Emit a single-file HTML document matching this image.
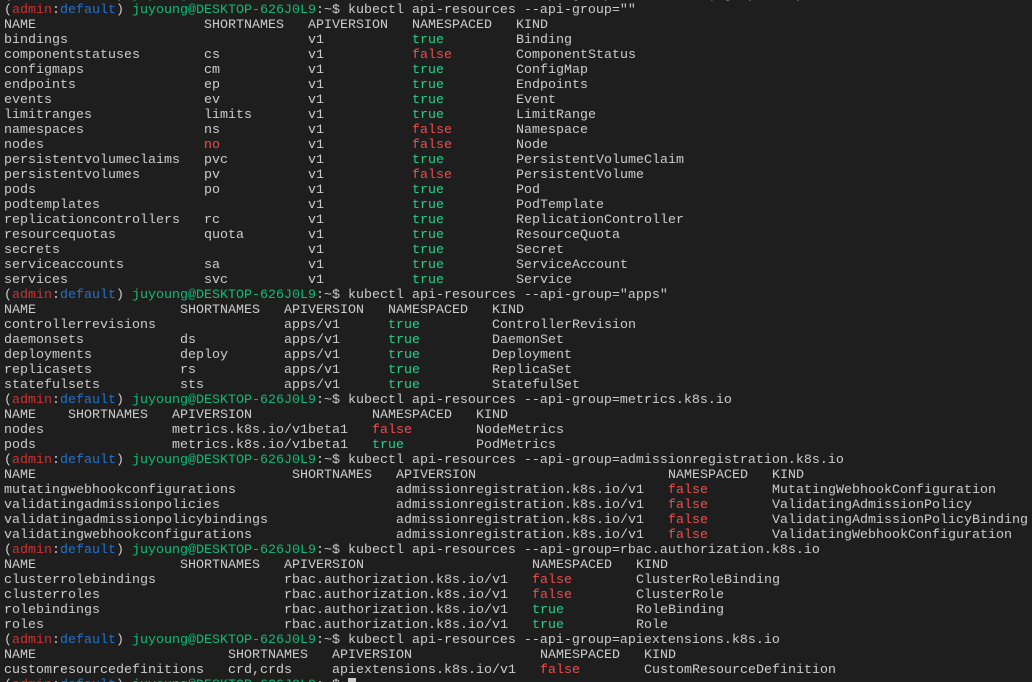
<!DOCTYPE html>
<html><head><meta charset="utf-8"><style>
html{overflow:hidden;height:682px}
html,body{margin:0;padding:0;background:#1e1e1e;width:1032px;height:682px}
body{position:relative;overflow:hidden}
.l{position:absolute;left:0;margin-top:1px;height:15px;line-height:15px;font-family:"Liberation Mono",monospace;font-size:13.33px;color:#cccccc;white-space:pre}
.l i{position:absolute;font-style:normal;top:0}
.t{color:#23d18b}.f{color:#f14c4c}.r{color:#cd3131}.b{color:#2472c8}.g{color:#0dbc79}
.cur{display:inline-block;width:8px;height:14px;background:#cccccc;vertical-align:top}
</style></head><body>
<div class="l" style="top:-13.5px;left:4px">(<span class="r">admin</span>:<span class="b">default</span>) <span class="g">juyoung@DESKTOP-626J0L9</span>:~$ kubectl api-resources --api-group="" -o wide | grep -i apiversion</div>
<div class="l" style="top:1.5px;left:4px">(<span class="r">admin</span>:<span class="b">default</span>) <span class="g">juyoung@DESKTOP-626J0L9</span>:~$ kubectl api-resources --api-group=""</div>

<div class="l" style="top:16.5px"><i style="left:4px">NAME</i><i style="left:204px">SHORTNAMES</i><i style="left:308px">APIVERSION</i><i style="left:412px">NAMESPACED</i><i style="left:516px">KIND</i></div>
<div class="l" style="top:31.5px"><i style="left:4px">bindings</i><i style="left:308px">v1</i><i class="t" style="left:412px">true</i><i style="left:516px">Binding</i></div>
<div class="l" style="top:46.5px"><i style="left:4px">componentstatuses</i><i style="left:204px">cs</i><i style="left:308px">v1</i><i class="f" style="left:412px">false</i><i style="left:516px">ComponentStatus</i></div>
<div class="l" style="top:61.5px"><i style="left:4px">configmaps</i><i style="left:204px">cm</i><i style="left:308px">v1</i><i class="t" style="left:412px">true</i><i style="left:516px">ConfigMap</i></div>
<div class="l" style="top:76.5px"><i style="left:4px">endpoints</i><i style="left:204px">ep</i><i style="left:308px">v1</i><i class="t" style="left:412px">true</i><i style="left:516px">Endpoints</i></div>
<div class="l" style="top:91.5px"><i style="left:4px">events</i><i style="left:204px">ev</i><i style="left:308px">v1</i><i class="t" style="left:412px">true</i><i style="left:516px">Event</i></div>
<div class="l" style="top:106.5px"><i style="left:4px">limitranges</i><i style="left:204px">limits</i><i style="left:308px">v1</i><i class="t" style="left:412px">true</i><i style="left:516px">LimitRange</i></div>
<div class="l" style="top:121.5px"><i style="left:4px">namespaces</i><i style="left:204px">ns</i><i style="left:308px">v1</i><i class="f" style="left:412px">false</i><i style="left:516px">Namespace</i></div>
<div class="l" style="top:136.5px"><i style="left:4px">nodes</i><i class="f" style="left:204px">no</i><i style="left:308px">v1</i><i class="f" style="left:412px">false</i><i style="left:516px">Node</i></div>
<div class="l" style="top:151.5px"><i style="left:4px">persistentvolumeclaims</i><i style="left:204px">pvc</i><i style="left:308px">v1</i><i class="t" style="left:412px">true</i><i style="left:516px">PersistentVolumeClaim</i></div>
<div class="l" style="top:166.5px"><i style="left:4px">persistentvolumes</i><i style="left:204px">pv</i><i style="left:308px">v1</i><i class="f" style="left:412px">false</i><i style="left:516px">PersistentVolume</i></div>
<div class="l" style="top:181.5px"><i style="left:4px">pods</i><i style="left:204px">po</i><i style="left:308px">v1</i><i class="t" style="left:412px">true</i><i style="left:516px">Pod</i></div>
<div class="l" style="top:196.5px"><i style="left:4px">podtemplates</i><i style="left:308px">v1</i><i class="t" style="left:412px">true</i><i style="left:516px">PodTemplate</i></div>
<div class="l" style="top:211.5px"><i style="left:4px">replicationcontrollers</i><i style="left:204px">rc</i><i style="left:308px">v1</i><i class="t" style="left:412px">true</i><i style="left:516px">ReplicationController</i></div>
<div class="l" style="top:226.5px"><i style="left:4px">resourcequotas</i><i style="left:204px">quota</i><i style="left:308px">v1</i><i class="t" style="left:412px">true</i><i style="left:516px">ResourceQuota</i></div>
<div class="l" style="top:241.5px"><i style="left:4px">secrets</i><i style="left:308px">v1</i><i class="t" style="left:412px">true</i><i style="left:516px">Secret</i></div>
<div class="l" style="top:256.5px"><i style="left:4px">serviceaccounts</i><i style="left:204px">sa</i><i style="left:308px">v1</i><i class="t" style="left:412px">true</i><i style="left:516px">ServiceAccount</i></div>
<div class="l" style="top:271.5px"><i style="left:4px">services</i><i style="left:204px">svc</i><i style="left:308px">v1</i><i class="t" style="left:412px">true</i><i style="left:516px">Service</i></div>

<div class="l" style="top:286.5px;left:4px">(<span class="r">admin</span>:<span class="b">default</span>) <span class="g">juyoung@DESKTOP-626J0L9</span>:~$ kubectl api-resources --api-group="apps"</div>
<div class="l" style="top:301.5px"><i style="left:4px">NAME</i><i style="left:180px">SHORTNAMES</i><i style="left:284px">APIVERSION</i><i style="left:388px">NAMESPACED</i><i style="left:492px">KIND</i></div>
<div class="l" style="top:316.5px"><i style="left:4px">controllerrevisions</i><i style="left:284px">apps/v1</i><i class="t" style="left:388px">true</i><i style="left:492px">ControllerRevision</i></div>
<div class="l" style="top:331.5px"><i style="left:4px">daemonsets</i><i style="left:180px">ds</i><i style="left:284px">apps/v1</i><i class="t" style="left:388px">true</i><i style="left:492px">DaemonSet</i></div>
<div class="l" style="top:346.5px"><i style="left:4px">deployments</i><i style="left:180px">deploy</i><i style="left:284px">apps/v1</i><i class="t" style="left:388px">true</i><i style="left:492px">Deployment</i></div>
<div class="l" style="top:361.5px"><i style="left:4px">replicasets</i><i style="left:180px">rs</i><i style="left:284px">apps/v1</i><i class="t" style="left:388px">true</i><i style="left:492px">ReplicaSet</i></div>
<div class="l" style="top:376.5px"><i style="left:4px">statefulsets</i><i style="left:180px">sts</i><i style="left:284px">apps/v1</i><i class="t" style="left:388px">true</i><i style="left:492px">StatefulSet</i></div>

<div class="l" style="top:391.5px;left:4px">(<span class="r">admin</span>:<span class="b">default</span>) <span class="g">juyoung@DESKTOP-626J0L9</span>:~$ kubectl api-resources --api-group=metrics.k8s.io</div>
<div class="l" style="top:406.5px"><i style="left:4px">NAME</i><i style="left:68px">SHORTNAMES</i><i style="left:172px">APIVERSION</i><i style="left:372px">NAMESPACED</i><i style="left:476px">KIND</i></div>
<div class="l" style="top:421.5px"><i style="left:4px">nodes</i><i style="left:172px">metrics.k8s.io/v1beta1</i><i class="f" style="left:372px">false</i><i style="left:476px">NodeMetrics</i></div>
<div class="l" style="top:436.5px"><i style="left:4px">pods</i><i style="left:172px">metrics.k8s.io/v1beta1</i><i class="t" style="left:372px">true</i><i style="left:476px">PodMetrics</i></div>

<div class="l" style="top:451.5px;left:4px">(<span class="r">admin</span>:<span class="b">default</span>) <span class="g">juyoung@DESKTOP-626J0L9</span>:~$ kubectl api-resources --api-group=admissionregistration.k8s.io</div>
<div class="l" style="top:466.5px"><i style="left:4px">NAME</i><i style="left:292px">SHORTNAMES</i><i style="left:396px">APIVERSION</i><i style="left:668px">NAMESPACED</i><i style="left:772px">KIND</i></div>
<div class="l" style="top:481.5px"><i style="left:4px">mutatingwebhookconfigurations</i><i style="left:396px">admissionregistration.k8s.io/v1</i><i class="f" style="left:668px">false</i><i style="left:772px">MutatingWebhookConfiguration</i></div>
<div class="l" style="top:496.5px"><i style="left:4px">validatingadmissionpolicies</i><i style="left:396px">admissionregistration.k8s.io/v1</i><i class="f" style="left:668px">false</i><i style="left:772px">ValidatingAdmissionPolicy</i></div>
<div class="l" style="top:511.5px"><i style="left:4px">validatingadmissionpolicybindings</i><i style="left:396px">admissionregistration.k8s.io/v1</i><i class="f" style="left:668px">false</i><i style="left:772px">ValidatingAdmissionPolicyBinding</i></div>
<div class="l" style="top:526.5px"><i style="left:4px">validatingwebhookconfigurations</i><i style="left:396px">admissionregistration.k8s.io/v1</i><i class="f" style="left:668px">false</i><i style="left:772px">ValidatingWebhookConfiguration</i></div>

<div class="l" style="top:541.5px;left:4px">(<span class="r">admin</span>:<span class="b">default</span>) <span class="g">juyoung@DESKTOP-626J0L9</span>:~$ kubectl api-resources --api-group=rbac.authorization.k8s.io</div>
<div class="l" style="top:556.5px"><i style="left:4px">NAME</i><i style="left:180px">SHORTNAMES</i><i style="left:284px">APIVERSION</i><i style="left:532px">NAMESPACED</i><i style="left:636px">KIND</i></div>
<div class="l" style="top:571.5px"><i style="left:4px">clusterrolebindings</i><i style="left:284px">rbac.authorization.k8s.io/v1</i><i class="f" style="left:532px">false</i><i style="left:636px">ClusterRoleBinding</i></div>
<div class="l" style="top:586.5px"><i style="left:4px">clusterroles</i><i style="left:284px">rbac.authorization.k8s.io/v1</i><i class="f" style="left:532px">false</i><i style="left:636px">ClusterRole</i></div>
<div class="l" style="top:601.5px"><i style="left:4px">rolebindings</i><i style="left:284px">rbac.authorization.k8s.io/v1</i><i class="t" style="left:532px">true</i><i style="left:636px">RoleBinding</i></div>
<div class="l" style="top:616.5px"><i style="left:4px">roles</i><i style="left:284px">rbac.authorization.k8s.io/v1</i><i class="t" style="left:532px">true</i><i style="left:636px">Role</i></div>

<div class="l" style="top:631.5px;left:4px">(<span class="r">admin</span>:<span class="b">default</span>) <span class="g">juyoung@DESKTOP-626J0L9</span>:~$ kubectl api-resources --api-group=apiextensions.k8s.io</div>
<div class="l" style="top:646.5px"><i style="left:4px">NAME</i><i style="left:228px">SHORTNAMES</i><i style="left:332px">APIVERSION</i><i style="left:540px">NAMESPACED</i><i style="left:644px">KIND</i></div>
<div class="l" style="top:661.5px"><i style="left:4px">customresourcedefinitions</i><i style="left:228px">crd,crds</i><i style="left:332px">apiextensions.k8s.io/v1</i><i class="f" style="left:540px">false</i><i style="left:644px">CustomResourceDefinition</i></div>
<div class="l" style="top:676.5px;left:4px">(<span class="r">admin</span>:<span class="b">default</span>) <span class="g">juyoung@DESKTOP-626J0L9</span>:~$ <span class="cur"></span></div>
</body></html>
